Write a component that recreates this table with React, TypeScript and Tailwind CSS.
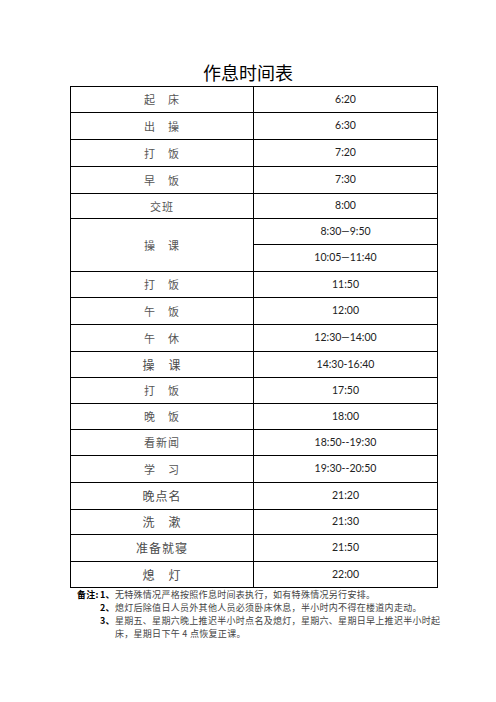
const cjk = { fontFamily: '"Noto Sans CJK SC", "Noto Sans", sans-serif' };
const num = { fontFamily: 'Lato, "Open Sans", sans-serif' };

type Row = { label: string; times: string[]; h: number; big?: boolean };

// h is the row pitch in px (includes the 1px top rule, except for the first row)
const rows: Row[] = [
  { label: "起　床", times: ["6:20"], h: 25 },
  { label: "出　操", times: ["6:30"], h: 27 },
  { label: "打　饭", times: ["7:20"], h: 27 },
  { label: "早　饭", times: ["7:30"], h: 27 },
  { label: "交班", times: ["8:00"], h: 25 },
  { label: "操　课", times: ["8:30—9:50", "10:05—11:40"], h: 53 },
  { label: "打　饭", times: ["11:50"], h: 26 },
  { label: "午　饭", times: ["12:00"], h: 27 },
  { label: "午　休", times: ["12:30—14:00"], h: 27 },
  { label: "操　课", times: ["14:30-16:40"], h: 26, big: true },
  { label: "打　饭", times: ["17:50"], h: 26 },
  { label: "晚　饭", times: ["18:00"], h: 26 },
  { label: "看新闻", times: ["18:50--19:30"], h: 26 },
  { label: "学　习", times: ["19:30--20:50"], h: 27 },
  { label: "晚点名", times: ["21:20"], h: 27, big: true },
  { label: "洗　漱", times: ["21:30"], h: 25, big: true },
  { label: "准备就寝", times: ["21:50"], h: 27, big: true },
  { label: "熄　灯", times: ["22:00"], h: 26, big: true },
];

function ScheduleRow({ row, first }: { row: Row; first: boolean }) {
  return (
    <div className={`flex ${first ? "" : "border-t border-black"}`} style={{ height: row.h }}>
      <div
        className={`w-[183px] shrink-0 border-r border-black flex items-center justify-center tracking-[1px] ${
          row.big ? "text-[12px] text-[#4a4a4a]" : "text-[11px] text-[#555]"
        }`}
        style={cjk}
      >
        {row.label}
      </div>
      <div className="flex-1 flex flex-col">
        {row.times.map((t, i) => (
          <div
            key={t}
            className={`flex items-center justify-center text-[10.5px] text-[#222] ${
              i > 0 ? "border-t border-black h-[27px]" : "flex-1"
            }`}
            style={num}
          >
            {t}
          </div>
        ))}
      </div>
    </div>
  );
}

export default function App() {
  return (
    <div className="w-[496px] h-[702px] bg-white" style={cjk}>
      <h1 className="pt-[59px] text-center text-[18px] leading-[26px] text-black">作息时间表</h1>

      <div className="ml-[70px] mt-[1px] w-[368px] border border-black">
        {rows.map((r, i) => (
          <ScheduleRow key={i} row={r} first={i === 0} />
        ))}
      </div>

      <div className="ml-[77px] text-[9px] leading-[13px] text-[#444] tracking-[0.3px] whitespace-nowrap">
        <div className="flex">
          <span className="font-bold text-black w-[23px] shrink-0">备注:</span>
          <span className="font-bold text-black shrink-0">1、</span>
          <span>无特殊情况严格按照作息时间表执行，如有特殊情况另行安排。</span>
        </div>
        <div className="flex pl-[23px]">
          <span className="font-bold text-black shrink-0">2、</span>
          <span>熄灯后除值日人员外其他人员必须卧床休息，半小时内不得在楼道内走动。</span>
        </div>
        <div className="flex pl-[23px]">
          <span className="font-bold text-black shrink-0">3、</span>
          <span>
            星期五、星期六晚上推迟半小时点名及熄灯，星期六、星期日早上推迟半小时起
            <br />
            床，星期日下午 4 点恢复正课。
          </span>
        </div>
      </div>
    </div>
  );
}
